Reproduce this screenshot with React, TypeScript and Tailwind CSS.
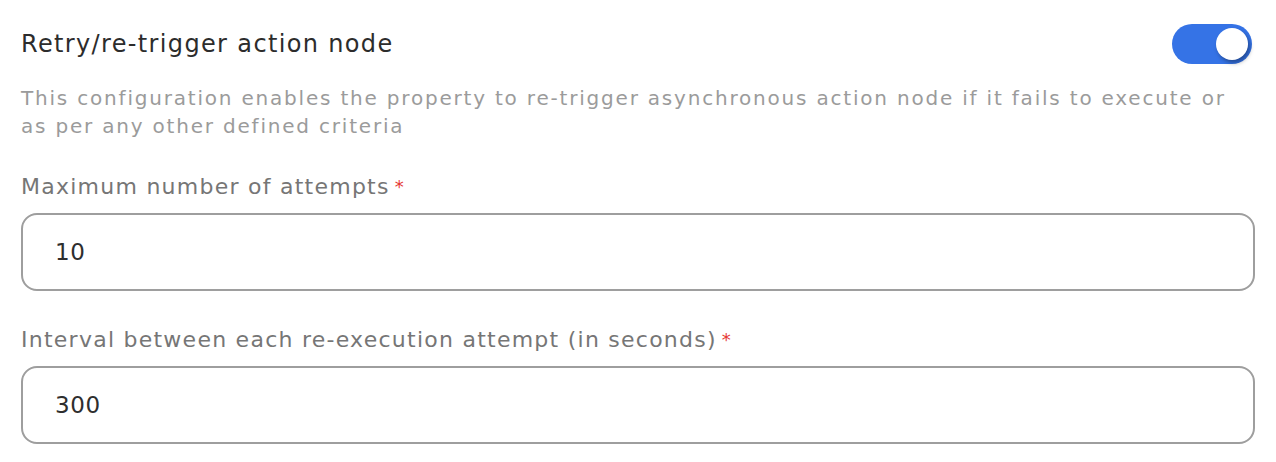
import { useState } from "react";

function Toggle() {
  const [on, setOn] = useState(true);
  return (
    <button
      onClick={() => setOn(!on)}
      className={`relative w-[80px] h-[40px] rounded-full shrink-0 mr-[3px] ${on ? "bg-[#3573e6]" : "bg-[#c8c8c8]"}`}
    >
      <span
        className={`absolute top-[4px] w-[32px] h-[32px] rounded-full bg-white shadow-[2px_3px_4px_rgba(0,0,0,0.35)] ${on ? "left-[44px]" : "left-[4px]"}`}
      />
    </button>
  );
}

function Field({ label, value }: { label: string; value: string }) {
  return (
    <div className="flex flex-col">
      <label className="text-[22px] leading-[28px] text-[#767676] tracking-[1.25px]">
        {label}
        <span className="text-[#e53935] ml-[5px] text-[18px] align-top">*</span>
      </label>
      <input
        defaultValue={value}
        className="mt-[12px] h-[78px] w-full rounded-[16px] border-2 border-[#9e9e9e] px-[32px] text-[23px] tracking-[0.6px] text-[#2e2e2e] outline-none"
      />
    </div>
  );
}

export default function App() {
  return (
    <div
      className="w-[1276px] h-[462px] bg-white px-[21px] pt-[24px]"
      style={{ fontFamily: "'DejaVu Sans', sans-serif" }}
    >
      <div className="flex items-center justify-between h-[40px]">
        <h2 className="text-[24px] text-[#2c2c2c] tracking-[1.35px]">
          Retry/re-trigger action node
        </h2>
        <Toggle />
      </div>
      <p className="mt-[20px] text-[20px] leading-[28px] text-[#9b9b9b] tracking-[1.8px] pr-[10px]">
        This configuration enables the property to re-trigger asynchronous action node if it fails to execute or
        as per any other defined criteria
      </p>
      <div className="mt-[33px] flex flex-col gap-[35px]">
        <Field label="Maximum number of attempts" value="10" />
        <Field label="Interval between each re-execution attempt (in seconds)" value="300" />
      </div>
    </div>
  );
}
